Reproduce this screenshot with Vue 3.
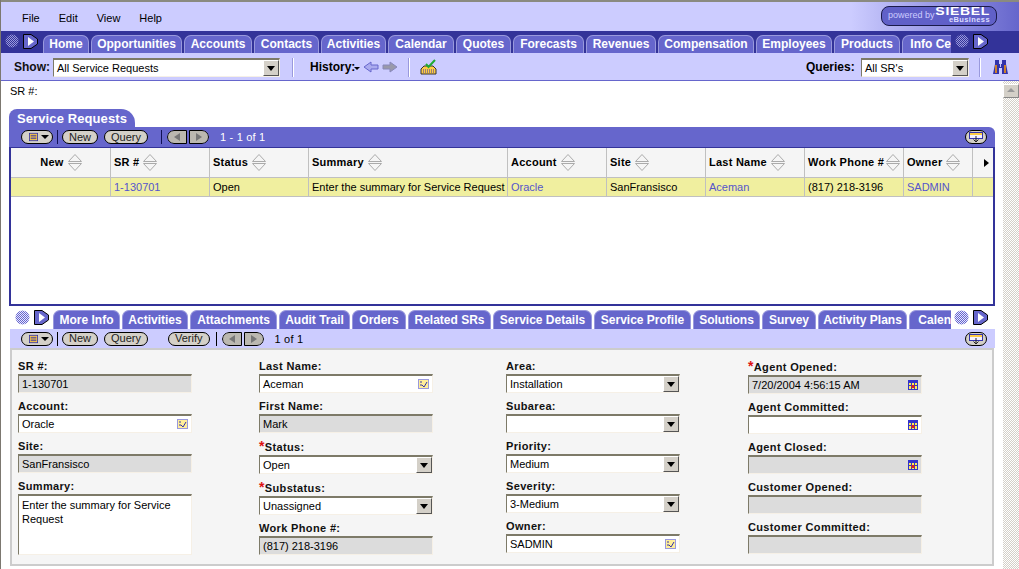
<script setup>
const menus = ['File', 'Edit', 'View', 'Help']
const topTabs = [
  ['Home', 46], ['Opportunities', 91], ['Accounts', 68], ['Contacts', 65], ['Activities', 65],
  ['Calendar', 66], ['Quotes', 55], ['Forecasts', 71], ['Revenues', 70], ['Compensation', 96],
  ['Employees', 76], ['Products', 66], ['Info Center', 80]
]
const subTabs = [
  ['More Info', 67], ['Activities', 66], ['Attachments', 87], ['Audit Trail', 71], ['Orders', 54],
  ['Related SRs', 83], ['Service Details', 99], ['Service Profile', 97], ['Solutions', 67],
  ['Survey', 54], ['Activity Plans', 89], ['Calendar', 70]
]
const columns = [
  { label: 'New', w: 100, center: true },
  { label: 'SR #', w: 99, value: '1-130701', link: true },
  { label: 'Status', w: 99, value: 'Open' },
  { label: 'Summary', w: 199, value: 'Enter the summary for Service Request' },
  { label: 'Account', w: 99, value: 'Oracle', link: true },
  { label: 'Site', w: 99, value: 'SanFransisco' },
  { label: 'Last Name', w: 99, value: 'Aceman', link: true },
  { label: 'Work Phone #', w: 99, value: '(817) 218-3196', tight: true },
  { label: 'Owner', w: 69, value: 'SADMIN', link: true }
]
const gridColumns = columns.map(c => c.w + 'px').join(' ') + ' 20px'
const formColumns = [
  { w: 241, fields: [
    { label: 'SR #:', kind: 'ro', value: '1-130701' },
    { label: 'Account:', kind: 'pick', value: 'Oracle' },
    { label: 'Site:', kind: 'ro', value: 'SanFransisco' },
    { label: 'Summary:', kind: 'area', value: 'Enter the summary for Service Request' }
  ] },
  { w: 247, fields: [
    { label: 'Last Name:', kind: 'pick', value: 'Aceman' },
    { label: 'First Name:', kind: 'ro', value: 'Mark' },
    { label: 'Status:', req: true, kind: 'sel', value: 'Open' },
    { label: 'Substatus:', req: true, kind: 'sel', value: 'Unassigned' },
    { label: 'Work Phone #:', kind: 'ro', value: '(817) 218-3196' }
  ] },
  { w: 242, fields: [
    { label: 'Area:', kind: 'sel', value: 'Installation' },
    { label: 'Subarea:', kind: 'sel', value: '' },
    { label: 'Priority:', kind: 'sel', value: 'Medium' },
    { label: 'Severity:', kind: 'sel', value: '3-Medium' },
    { label: 'Owner:', kind: 'pick', value: 'SADMIN' }
  ] },
  { w: 200, fields: [
    { label: 'Agent Opened:', req: true, kind: 'date ro', value: '7/20/2004 4:56:15 AM' },
    { label: 'Agent Committed:', kind: 'date', value: '' },
    { label: 'Agent Closed:', kind: 'date ro', value: '' },
    { label: 'Customer Opened:', kind: 'ro', value: '' },
    { label: 'Customer Committed:', kind: 'ro', value: '' }
  ] }
]
</script>

<template>
  <div class="page">
    <svg class="defs" width="0" height="0">
      <defs>
        <pattern id="dither" width="2" height="2" patternUnits="userSpaceOnUse">
          <rect width="2" height="2" fill="#6666cc" />
          <rect width="1" height="1" fill="#e6e6ff" />
          <rect x="1" y="1" width="1" height="1" fill="#e6e6ff" />
        </pattern>
        <pattern id="ditherdark" width="2" height="2" patternUnits="userSpaceOnUse">
          <rect width="2" height="2" fill="#333399" />
          <rect width="1" height="1" fill="#9999dd" />
          <rect x="1" y="1" width="1" height="1" fill="#9999dd" />
        </pattern>
      </defs>
    </svg>

    <header class="menubar">
      <nav class="menus">
        <span v-for="m in menus" :key="m" class="menu">{{ m }}</span>
      </nav>
      <div class="logo">
        <span class="powered">powered by</span>
        <span class="brand"><b>SIEBEL</b><i>eBusiness</i></span>
      </div>
    </header>

    <div class="tabbar">
      <div class="scrollers">
        <svg width="14" height="14" viewBox="0 0 14 14"><circle cx="7" cy="7" r="6.5" fill="url(#ditherdark)" /></svg>
        <svg width="15" height="15" viewBox="0 0 15 15"><path d="M.5.5H8L14.500 5V10L8 14.500H.5Z" fill="#6666cc" stroke="#000" /><path d="M5 3 11 7.500 5 12Z" fill="#fff" /></svg>
      </div>
      <div class="tabs">
        <span v-for="t in topTabs" :key="t[0]" class="tab" :style="{ width: t[1] + 'px' }">{{ t[0] }}</span>
      </div>
      <div class="scrollers right">
        <svg width="14" height="14" viewBox="0 0 14 14"><circle cx="7" cy="7" r="6.5" fill="url(#ditherdark)" /></svg>
        <svg width="15" height="15" viewBox="0 0 15 15"><path d="M.5.5H8L14.500 5V10L8 14.500H.5Z" fill="#6666cc" stroke="#000" /><path d="M5 3 11 7.500 5 12Z" fill="#fff" /></svg>
      </div>
    </div>

    <div class="toolbar">
      <span class="show">Show:</span>
      <div class="control sel view-select"><span>All Service Requests</span><i class="drop"></i></div>
      <i class="tsep first"></i>
      <span class="history">History:</span>
      <svg class="hist" width="46" height="16" viewBox="0 0 46 16">
        <path d="M1 8H7L4 11Z" fill="#000" />
        <path d="M11 8 18 3V6H25V10H18V13Z" fill="#aaaaee" stroke="#6666cc" />
        <path d="M44 8 37 3V6H30V10H37V13Z" fill="#9999aa" stroke="#8888bb" />
      </svg>
      <i class="tsep second"></i>
      <svg class="savetool" width="17" height="16" viewBox="0 0 17 16">
        <path d="M1 10 4 7H13L16 10V15H1Z" fill="#ffcc44" stroke="#333" />
        <path d="M3 11H14M3 13H14" stroke="#3333aa" stroke-dasharray="1 1" />
        <path d="M6 5 8.500 8 15 1" fill="none" stroke="#22aa33" stroke-width="2" />
      </svg>
      <span class="queries">Queries:</span>
      <div class="control sel query-select"><span>All SR's</span><i class="drop"></i></div>
      <i class="tsep third"></i>
      <svg class="binoc" width="15" height="16" viewBox="0 0 15 16">
        <path d="M2 1H6V5H9V1H13V5L15 15H9V9H6V15H0L2 5Z" fill="#3333aa" />
        <path d="M3 6V14M12 6V14" stroke="#ff9900" stroke-width="1.500" />
        <path d="M7 5H8V8H7Z" fill="#ccccff" />
      </svg>
    </div>

    <div class="workspace">
      <main class="main">
        <div class="srline">SR #:</div>
        <div class="title-tab">Service Requests</div>

        <section class="applet">
          <div class="bar dark">
            <span class="pill icon">
              <svg width="11" height="10" viewBox="0 0 11 10"><rect x=".5" y=".5" width="10" height="9" fill="#ffcc44" stroke="#3333aa" /><path d="M2 3H9M2 5H9M2 7H9" stroke="#3333aa" /></svg>
              <i class="caret"></i>
            </span>
            <i class="bsep"></i>
            <span class="pill">New</span>
            <span class="pill">Query</span>
            <i class="bsep wide"></i>
            <span class="pager"><i class="prev"></i><i class="next"></i></span>
            <span class="count light">1 - 1 of 1</span>
            <span class="pill layout">
              <svg width="14" height="11" viewBox="0 0 14 11"><rect x=".5" y=".5" width="13" height="6" fill="#f4f0ff" stroke="#3333aa" /><rect x="1" y="1" width="12" height="2" fill="#ffcc44" /><path d="M7 4V10M4.500 7.500 7 10 9.500 7.500" fill="none" stroke="#222" /></svg>
            </span>
          </div>

          <div class="list">
            <div class="list-row head" :style="{ gridTemplateColumns: gridColumns }">
              <div v-for="c in columns" :key="c.label" class="cell" :class="{ center: c.center, tight: c.tight }">
                <span>{{ c.label }}</span>
                <svg width="14" height="19" viewBox="0 0 14 19" class="sort">
                  <path d="M.5 8.500 7 1.500 13.500 8.500ZM.5 10.500 7 17.500 13.500 10.500Z" fill="none" stroke="#aaa" />
                </svg>
              </div>
              <div class="cell more"><i></i></div>
            </div>
            <div class="list-row data" :style="{ gridTemplateColumns: gridColumns }">
              <div v-for="c in columns" :key="c.label" class="cell" :class="{ link: c.link }">{{ c.value }}</div>
              <div class="cell end"></div>
            </div>
          </div>
        </section>

        <div class="subtabbar">
          <div class="scrollers sub">
            <svg width="15" height="15" viewBox="0 0 15 15"><circle cx="7.500" cy="7.500" r="7" fill="url(#dither)" /></svg>
            <svg width="15" height="15" viewBox="0 0 15 15"><path d="M.5.5H8L14.500 5V10L8 14.500H.5Z" fill="#6666cc" stroke="#000" /><path d="M5 3 11 7.500 5 12Z" fill="#fff" /></svg>
          </div>
          <div class="tabs">
            <span v-for="t in subTabs" :key="t[0]" class="tab" :style="{ width: t[1] + 'px' }">{{ t[0] }}</span>
          </div>
          <div class="scrollers right sub">
            <svg width="15" height="15" viewBox="0 0 15 15"><circle cx="7.500" cy="7.500" r="7" fill="url(#dither)" /></svg>
            <svg width="15" height="15" viewBox="0 0 15 15"><path d="M.5.5H8L14.500 5V10L8 14.500H.5Z" fill="#6666cc" stroke="#000" /><path d="M5 3 11 7.500 5 12Z" fill="#fff" /></svg>
          </div>
        </div>

        <section class="detail">
          <div class="bar pale">
            <span class="pill icon">
              <svg width="11" height="10" viewBox="0 0 11 10"><rect x=".5" y=".5" width="10" height="9" fill="#ffcc44" stroke="#3333aa" /><path d="M2 3H9M2 5H9M2 7H9" stroke="#3333aa" /></svg>
              <i class="caret"></i>
            </span>
            <i class="bsep"></i>
            <span class="pill">New</span>
            <span class="pill">Query</span>
            <span class="pill verify">Verify</span>
            <i class="bsep"></i>
            <span class="pager"><i class="prev"></i><i class="next"></i></span>
            <span class="count">1 of 1</span>
            <span class="pill layout">
              <svg width="14" height="11" viewBox="0 0 14 11"><rect x=".5" y=".5" width="13" height="6" fill="#f4f0ff" stroke="#3333aa" /><rect x="1" y="1" width="12" height="2" fill="#ffcc44" /><path d="M7 4V10M4.500 7.500 7 10 9.500 7.500" fill="none" stroke="#222" /></svg>
            </span>
          </div>

          <div class="form">
            <div v-for="(col, i) in formColumns" :key="i" class="form-col" :style="{ width: col.w + 'px' }">
              <div v-for="f in col.fields" :key="f.label" class="field" :class="{ req: f.req }">
                <label><em v-if="f.req">*</em>{{ f.label }}</label>
                <div class="control" :class="f.kind">
                  <span>{{ f.value }}</span>
                  <i v-if="f.kind === 'sel'" class="drop"></i>
                  <svg v-if="f.kind === 'pick'" class="pick-icon" width="11" height="10" viewBox="0 0 11 10">
                    <rect width="11" height="10" fill="#ffee99" />
                    <rect x=".5" y=".5" width="10" height="9" fill="none" stroke="#9999dd" />
                    <path d="M2 3H4M2 6H4" stroke="#3333aa" />
                    <path d="M4 6 6 8 9 3" fill="none" stroke="#3333aa" />
                  </svg>
                  <svg v-if="f.kind.includes('date')" class="pick-icon" width="10" height="10" viewBox="0 0 10 10">
                    <rect width="10" height="10" fill="#3333cc" />
                    <path d="M1 3H3V5H1ZM4 3H6V5H4ZM7 3H9V5H7ZM1 6H3V9H1ZM7 6H9V9H7ZM4 8H6V9H4Z" fill="#ffee55" />
                    <rect x="3.500" y="5" width="3" height="3" fill="#dd2222" />
                  </svg>
                </div>
              </div>
            </div>
          </div>
        </section>
      </main>

      <aside class="scrollbar">
        <div class="up"><i></i></div>
      </aside>
    </div>
  </div>
</template>

<style>
body { margin: 0; background: #fff; }
</style>

<style scoped>
.page {
  width: 1018px; height: 569px; overflow: hidden; background: #fff;
  border-left: 1px solid #7c7870;
  font: 11px/14px "Liberation Sans", Arial, sans-serif; color: #000;
  display: flex; flex-direction: column;
}
.defs { position: absolute; }
.menubar {
  height: 29px; border-top: 2px solid #8a8a80; flex: none;
  background: linear-gradient(90deg, #ccccff 0, #ccccff 83.500%, #6666cc 100%);
  display: flex; justify-content: space-between; align-items: flex-start;
}
.menus { display: flex; margin: 9px 0 0 21px; }
.menu { margin-right: 19px; }
.logo {
  width: 108px; height: 18px; margin: 4px 22px 0 0; border: 1px solid #1a1a4a; border-radius: 8px;
  background: #6060c8; color: #ccccff; display: flex; align-items: center; padding-left: 6px;
  box-sizing: content-box; flex: none;
}
.powered { font-size: 9px; white-space: nowrap; margin-top: -3px; flex: none; width: 46px; }
.brand { display: flex; flex-direction: column; align-items: flex-end; line-height: 8px; flex: 1; padding-right: 6px; }
.brand b { color: #fff; font-size: 10px; letter-spacing: .5px; transform: scaleX(1.400); transform-origin: right; }
.brand i { font: bold 7.500px/8px "Liberation Sans", sans-serif; color: #ddddff; letter-spacing: .4px; }

.tabbar { height: 22px; background: #333399; display: flex; position: relative; flex: none; }
.scrollers { width: 42px; padding: 3px 0 0 4px; box-sizing: border-box; display: flex; align-items: flex-start; gap: 4px; flex: none; }
.scrollers.right { position: absolute; left: 950px; top: 0; width: 60px; background: #333399; height: 22px; }
.tabs { display: flex; overflow: hidden; align-items: flex-end; gap: 2px; flex: none; width: 908px; }
.tab {
  flex: none; height: 18px; box-sizing: border-box; background: #6666cc; color: #fff;
  border: 1px solid #9999dd; border-bottom: 0; border-radius: 7px 7px 0 0;
  font-weight: bold; font-size: 12px; line-height: 16px; text-align: center; white-space: nowrap; overflow: hidden;
}

.toolbar {
  background: #ccccff; border-bottom: 1px solid #6666cc; flex: none;
  display: flex; align-items: center; padding: 1px 0 0 13px; box-sizing: border-box; height: 28px;
}
.toolbar > * { flex: none; }
.show, .history, .queries { font-weight: bold; font-size: 12px; }
.show { width: 39px; color: #111; }
.toolbar .view-select { width: 227px; }
.toolbar .query-select { width: 108px; margin-left: 7px; }
.tsep { width: 2px; height: 19px; background: #9999dd; border-right: 1px solid #fff; box-sizing: border-box; }
.first { margin-left: 12px; }
.history { margin-left: 16px; width: 42px; }
.hist { margin-left: 1px; }
.second { margin-left: 9px; }
.savetool { margin-left: 10px; }
.queries { margin-left: 369px; width: 48px; }
.third { margin-left: 10px; }
.binoc { margin-left: 12px; }

.workspace { flex: 1; display: flex; min-height: 0; }
.main { width: 986px; margin-left: 8px; flex: none; }
.srline { height: 28px; line-height: 21px; margin-left: 1px; }
.title-tab {
  width: 126px; height: 18px; box-sizing: border-box; background: #6666cc; color: #fff; font-weight: bold; font-size: 13px;
  line-height: 19px; padding-left: 8px; border-radius: 8px 14px 0 0; letter-spacing: .1px;
}

.bar { display: flex; align-items: center; position: relative; padding-left: 12px; box-sizing: border-box; }
.bar.dark { height: 20px; background: #6666cc; border-radius: 0 6px 0 0; }
.bar.pale { height: 19px; background: #ccccff; padding-left: 11px; }
.pill {
  height: 14px; box-sizing: border-box; border: 1px solid #000; border-radius: 7px; background: #d4d0c8;
  padding: 0 6px; line-height: 11px; margin-right: 6px; color: #222; display: inline-flex; align-items: center; flex: none;
}
.pill.icon { width: 32px; gap: 3px; padding: 0 3px 0 7px; margin-right: 4px; }
.caret { width: 0; height: 0; border: 4px solid transparent; border-top-color: #000; border-bottom: 0; }
.pill.verify { margin-left: 14px; }
.pill.layout { position: absolute; right: 8px; top: 3px; width: 22px; margin: 0; padding: 0 3px; }
.bsep { width: 1px; height: 14px; background: #000; margin-right: 4px; flex: none; }
.bsep.wide { margin-left: 7px; }
.bar.dark .bsep { background: #111155; }
.pager { display: inline-flex; height: 14px; width: 42px; margin-left: 1px; border-radius: 7px; overflow: hidden; justify-content: space-between; flex: none; }
.pager i { width: 20px; background: #bbb8b0; border: 1px solid #000; box-sizing: border-box; position: relative; }
.pager .prev { border-radius: 7px 0 0 7px; }
.pager .next { border-radius: 0 7px 7px 0; }
.pager i::after { content: ""; position: absolute; top: 2px; left: 6px; border: 4px solid transparent; }
.pager .prev::after { border-right: 6px solid #777; border-left: 0; }
.pager .next::after { border-left: 6px solid #777; border-right: 0; }
.count { margin-left: 11px; letter-spacing: .2px; }
.count.light { color: #fff; }

.list { height: 159px; box-sizing: border-box; border: 2px solid #333399; border-top-width: 1px; background: #fff; }
.list-row { display: grid; }
.head { height: 30px; background: #f5f5f5; border-bottom: 1px solid #c0c0c0; box-sizing: border-box; }
.head .cell { font-weight: bold; display: flex; align-items: center; gap: 4px; letter-spacing: .25px; padding-bottom: 1px; }
.head .cell.center { justify-content: center; padding-right: 2px; }
.head .cell.tight { gap: 2px; }
.sort { flex: none; }
.head .cell.more i { display: block; margin-left: 11px; border: 4px solid transparent; border-left: 5px solid #000; border-right: 0; }
.cell { border-right: 1px solid #c0c0c0; padding-left: 3px; box-sizing: border-box; white-space: nowrap; overflow: hidden; }
.cell.more, .cell.end { border-right: 0; padding: 0; }
.data { height: 19px; background: #f0ef9f; border-bottom: 1px solid #c0c0c0; box-sizing: border-box; line-height: 18px; }
.link { color: #5555cc; }

.subtabbar { height: 19px; margin-top: 4px; display: flex; position: relative; }
.scrollers.sub { width: 44px; padding: 0 0 0 6px; gap: 4px; background: transparent; }
.scrollers.right.sub { left: 942px; background: #fff; height: 19px; width: 44px; padding-left: 3px; }
.subtabbar .tabs { width: 898px; }
.subtabbar .tab { height: 19px; line-height: 18px; }

.detail { margin-left: 1px; }
.form {
  height: 218px; box-sizing: border-box; background: #f5f5f5;
  border: 2px solid #cccccc; width: 984px;
  display: flex; padding: 9px 0 0 6px;
}
.form-col { flex: none; }
.field { height: 40px; width: 174px; }
.field.req { height: 41px; }
.field label { display: block; height: 15px; line-height: 14px; font-weight: bold; white-space: nowrap; letter-spacing: .35px; color: #111; }
.field.req label { height: 16px; line-height: 16px; }
.field em { color: #dd1111; font-size: 14px; font-style: normal; line-height: 10px; }
.control {
  height: 19px; width: 174px; box-sizing: border-box; border-style: solid; border-color: #7d7a68 #f6f0e6 #f6f0e6 #7d7a68;
  border-width: 2px 1px 1px 1px; background: #fff; display: flex; align-items: center; justify-content: space-between;
  padding-left: 3px; position: relative; white-space: nowrap;
}
.control.ro { background: #dcdcdc; }
.control.area { height: 61px; align-items: flex-start; white-space: normal; line-height: 14px; padding: 2px 16px 0 3px; }
.drop { width: 16px; height: 16px; box-sizing: border-box; background: #d4d0c8; border: 1px solid; border-color: #fff #555 #555 #fff; position: relative; flex: none; }
.drop::after { content: ""; position: absolute; left: 3px; top: 5px; border: 4px solid transparent; border-top: 5px solid #000; border-bottom: 0; }
.pick-icon { margin-right: 3px; flex: none; }

.scrollbar {
  width: 16px; margin-left: 8px; flex: none;
  background-color: #f4f3ea;
  background-image: conic-gradient(#d4d0c8 25%, #fff 0 50%, #d4d0c8 0 75%, #fff 0);
  background-size: 2px 2px;
}
.up { height: 14px; margin-top: 3px; background: #d4d0c8; border: 1px solid; border-color: #fff #888 #888 #fff; box-sizing: border-box; position: relative; }
.up i { position: absolute; left: 3px; top: 3px; border: 4px solid transparent; border-bottom: 4px solid #999; border-top: 0; }
</style>
